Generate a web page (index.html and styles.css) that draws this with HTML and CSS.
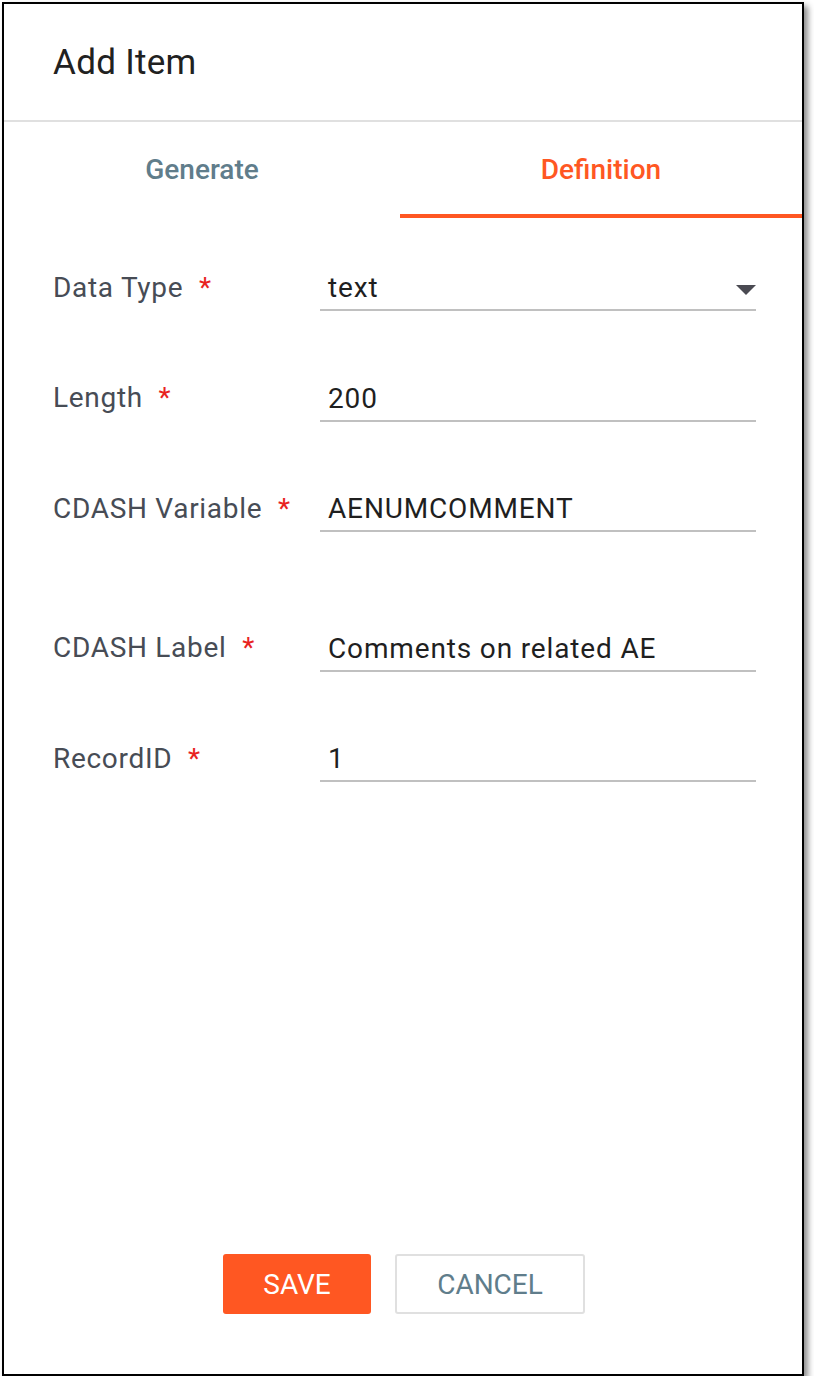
FILE: index.html
```html
<!DOCTYPE html>
<html lang="en">
<head>
<meta charset="utf-8">
<title>Add Item</title>
<link rel="stylesheet" href="styles.css">
</head>
<body>
<div class="dialog">
  <header class="dialog-header">
    <h1 class="dialog-title">Add Item</h1>
  </header>
  <nav class="tabs">
    <div class="tab tab-first">Generate</div>
    <div class="tab tab-active">Definition</div>
  </nav>
  <form class="form">
    <div class="row">
      <label class="label">Data Type <span class="req">*</span></label>
      <div class="field field-select">
        <span class="value">text</span>
        <svg class="caret" width="20" height="10" viewBox="0 0 20 10"><path d="M0 0 L20 0 L10 10 Z" fill="#4a4a52"/></svg>
      </div>
    </div>
    <div class="row">
      <label class="label">Length <span class="req">*</span></label>
      <div class="field"><span class="value">200</span></div>
    </div>
    <div class="row">
      <label class="label">CDASH Variable <span class="req">*</span></label>
      <div class="field"><span class="value">AENUMCOMMENT</span></div>
    </div>
    <div class="row row-spaced">
      <label class="label">CDASH Label <span class="req">*</span></label>
      <div class="field"><span class="value">Comments on related AE</span></div>
    </div>
    <div class="row">
      <label class="label">RecordID <span class="req">*</span></label>
      <div class="field"><span class="value">1</span></div>
    </div>
  </form>
  <footer class="actions">
    <button class="btn btn-save" type="button">SAVE</button>
    <button class="btn btn-cancel" type="button">CANCEL</button>
  </footer>
</div>
</body>
</html>
```

FILE: styles.css
```css
html, body {
  margin: 0;
  padding: 0;
  background: #ffffff;
}
body {
  font-family: Roboto, "Liberation Sans", Arial, sans-serif;
  padding: 2px 0 0 2px;
}
.dialog {
  box-sizing: border-box;
  width: 802px;
  height: 1374px;
  border: 2px solid #000;
  background: #fff;
  box-shadow: 4px 4px 6px rgba(0, 0, 0, 0.45);
  display: flex;
  flex-direction: column;
}
.dialog-header {
  height: 116px;
  border-bottom: 2px solid #e0e0e0;
  display: flex;
  align-items: center;
  padding-left: 49px;
}
.dialog-title {
  margin: 0;
  font-size: 35px;
  font-weight: 400;
  color: #212121;
  letter-spacing: 0.3px;
}
.tabs {
  display: flex;
  height: 96px;
}
.tab {
  display: flex;
  align-items: center;
  justify-content: center;
  font-size: 28px;
  font-weight: 500;
  color: #607d8b;
  box-sizing: border-box;
  padding-bottom: 2px;
}
.tab-first {
  width: 396px;
}
.tab-active {
  flex: 1;
  color: #ff5722;
  border-bottom: 4px solid #ff5722;
  padding-bottom: 0;
  padding-top: 2px;
}
.form {
  flex: 1;
  padding: 48px 46px 0 49px;
  display: flex;
  flex-direction: column;
  gap: 65.5px;
}
.row {
  display: flex;
  align-items: center;
}
.row-spaced {
  margin-top: 29px;
}
.label {
  width: 267px;
  flex: none;
  font-size: 28px;
  color: #474c55;
  letter-spacing: 0.7px;
  margin-top: -3px;
}
.req {
  color: #e8231f;
  margin-left: 8px;
}
.field {
  flex: 1;
  height: 43px;
  border-bottom: 2px solid #c0c0c0;
  display: flex;
  align-items: center;
  padding-left: 8px;
}
.field-select {
  justify-content: space-between;
}
.value {
  font-size: 28px;
  color: #1f1f1f;
  letter-spacing: 0.85px;
}
.caret {
  display: block;
  margin-top: 4px;
}
.actions {
  display: flex;
  justify-content: center;
  gap: 24px;
  padding: 0 0 60px 2px;
}
.btn {
  height: 60px;
  border-radius: 3px;
  font-family: Roboto, "Liberation Sans", Arial, sans-serif;
  font-size: 28px;
  font-weight: 400;
  cursor: pointer;
}
.btn-save {
  width: 148px;
  background: #ff5722;
  color: #fff;
  border: none;
}
.btn-cancel {
  width: 190px;
  background: #fff;
  color: #607d8b;
  border: 2px solid #e0e0e0;
}
```
